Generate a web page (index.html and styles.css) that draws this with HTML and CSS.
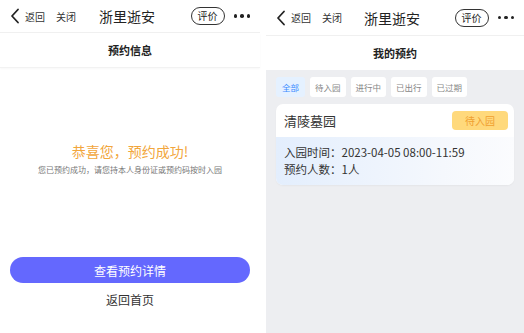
FILE: index.html
```html
<!DOCTYPE html>
<html lang="zh-CN">
<head>
  <meta charset="UTF-8" />
  <meta name="viewport" content="width=device-width, initial-scale=1.0" />
  <title>浙里逝安</title>
  <link rel="stylesheet" href="styles.css">
</head>
<body>
  <div class="screen screen-left">
    <div class="navbar">
      <div class="nav-left">
        <svg class="back" width="10" height="16" viewBox="0 0 10 16"><path d="M8 1.5 L2 8 L8 14.5" fill="none" stroke="#222" stroke-width="1.8" stroke-linecap="round" stroke-linejoin="round"/></svg>
        <span class="nav-link">返回</span>
        <span class="nav-link">关闭</span>
      </div>
      <div class="nav-title">浙里逝安</div>
      <div class="nav-right">
        <span class="rate">评价</span>
        <span class="dots"><i></i><i></i><i></i></span>
      </div>
    </div>
    <div class="page-title shadow">预约信息</div>

    <div class="success">
      <div class="success-title">恭喜您，预约成功!</div>
      <div class="success-sub">您已预约成功，请您持本人身份证或预约码按时入园</div>
    </div>

    <div class="actions">
      <button class="primary">查看预约详情</button>
      <div class="home-link">返回首页</div>
    </div>
  </div>

  <div class="screen screen-right">
    <div class="navbar">
      <div class="nav-left">
        <svg class="back" width="10" height="16" viewBox="0 0 10 16"><path d="M8 1.5 L2 8 L8 14.5" fill="none" stroke="#222" stroke-width="1.8" stroke-linecap="round" stroke-linejoin="round"/></svg>
        <span class="nav-link">返回</span>
        <span class="nav-link">关闭</span>
      </div>
      <div class="nav-title">浙里逝安</div>
      <div class="nav-right">
        <span class="rate">评价</span>
        <span class="dots"><i></i><i></i><i></i></span>
      </div>
    </div>
    <div class="page-title">我的预约</div>

    <div class="list-area">
      <div class="tabs">
        <span class="tab active">全部</span>
        <span class="tab">待入园</span>
        <span class="tab">进行中</span>
        <span class="tab">已出行</span>
        <span class="tab">已过期</span>
      </div>

      <div class="card">
        <div class="card-head">
          <span class="card-name">清陵墓园</span>
          <span class="badge">待入园</span>
        </div>
        <div class="card-body">
          <div class="row">入园时间：2023-04-05 08:00-11:59</div>
          <div class="row">预约人数：1人</div>
        </div>
      </div>
    </div>
  </div>
</body>
</html>
```

FILE: styles.css
```css
body {
  margin: 0;
  width: 524px;
  height: 333px;
  display: flex;
  gap: 6px;
  background: #fff;
  font-family: "Noto Sans CJK SC", "Noto Sans", sans-serif;
  color: #222;
  overflow: hidden;
}

.screen {
  display: flex;
  flex-direction: column;
  height: 333px;
}

.screen-left {
  width: 260px;
}

.screen-right {
  width: 258px;
}

.navbar {
  height: 32px;
  display: flex;
  align-items: center;
  justify-content: space-between;
  border-bottom: 1px solid #f0f0f0;
  position: relative;
  flex-shrink: 0;
}

.screen-right .navbar {
  height: 35px;
}

.nav-left {
  display: flex;
  align-items: center;
  padding-left: 10px;
}

.back {
  margin-right: 5px;
}

.nav-link {
  font-size: 10px;
  color: #333;
  margin-right: 11px;
}

.nav-title {
  position: absolute;
  left: 0;
  right: 0;
  text-align: center;
  font-size: 14px;
  color: #222;
  pointer-events: none;
  margin-left: -6px;
}

.nav-right {
  display: flex;
  align-items: center;
  padding-right: 10px;
}

.rate {
  font-size: 10px;
  line-height: 14px;
  border: 1px solid #333;
  border-radius: 9px;
  padding: 1px 6px;
  margin-right: 9px;
}

.dots {
  display: flex;
  gap: 3px;
}

.dots i {
  width: 3.5px;
  height: 3.5px;
  border-radius: 50%;
  background: #222;
}

.page-title {
  height: 34px;
  display: flex;
  align-items: center;
  justify-content: center;
  font-size: 11px;
  font-weight: bold;
  color: #222;
  flex-shrink: 0;
}

.page-title.shadow {
  border-bottom: 1px solid #f2f2f2;
  box-shadow: 0 1px 2px rgba(0, 0, 0, 0.03);
}

.success {
  margin-top: 73px;
  text-align: center;
}

.success-title {
  font-size: 14px;
  color: #f2a63c;
  line-height: 20px;
}

.success-sub {
  font-size: 8px;
  color: #777;
  margin-top: 3px;
}

.actions {
  margin-top: auto;
  margin-bottom: 25px;
  padding: 0 10px;
  text-align: center;
}

.primary {
  width: 100%;
  height: 26px;
  border: none;
  border-radius: 13px;
  background: #6468fe;
  color: #fff;
  font-size: 12px;
  font-family: inherit;
  padding: 0;
}

.home-link {
  font-size: 12px;
  line-height: 17px;
  color: #333;
  margin-top: 8px;
}

.list-area {
  flex: 1;
  background: #edeef1;
  padding: 7px 10px 0;
}

.tabs {
  display: flex;
  gap: 5px;
}

.tab {
  font-size: 8.5px;
  color: #888;
  background: #fff;
  border-radius: 3px;
  padding: 0 5px;
  height: 20px;
  line-height: 20px;
}

.tab.active {
  background: #e5f1ff;
  color: #3b8cff;
  padding: 0 6px;
}

.card {
  margin-top: 7px;
  background: #fff;
  border-radius: 7px;
  overflow: hidden;
  box-shadow: 0 1px 2px rgba(0, 0, 0, 0.04);
}

.card-head {
  height: 33px;
  display: flex;
  align-items: center;
  justify-content: space-between;
  padding: 0 6px 0 8px;
}

.card-name {
  font-size: 13px;
  color: #333;
}

.badge {
  width: 56px;
  height: 19px;
  line-height: 19px;
  text-align: center;
  border-radius: 4px;
  background: #ffd97c;
  color: #f0a030;
  font-size: 10px;
}

.card-body {
  background: linear-gradient(to right, #e3eefd, #f5f8fd 70%, #fbfcfe);
  padding: 7px 8px 7px;
}

.row {
  font-size: 11.5px;
  color: #333;
  line-height: 17px;
}
```
